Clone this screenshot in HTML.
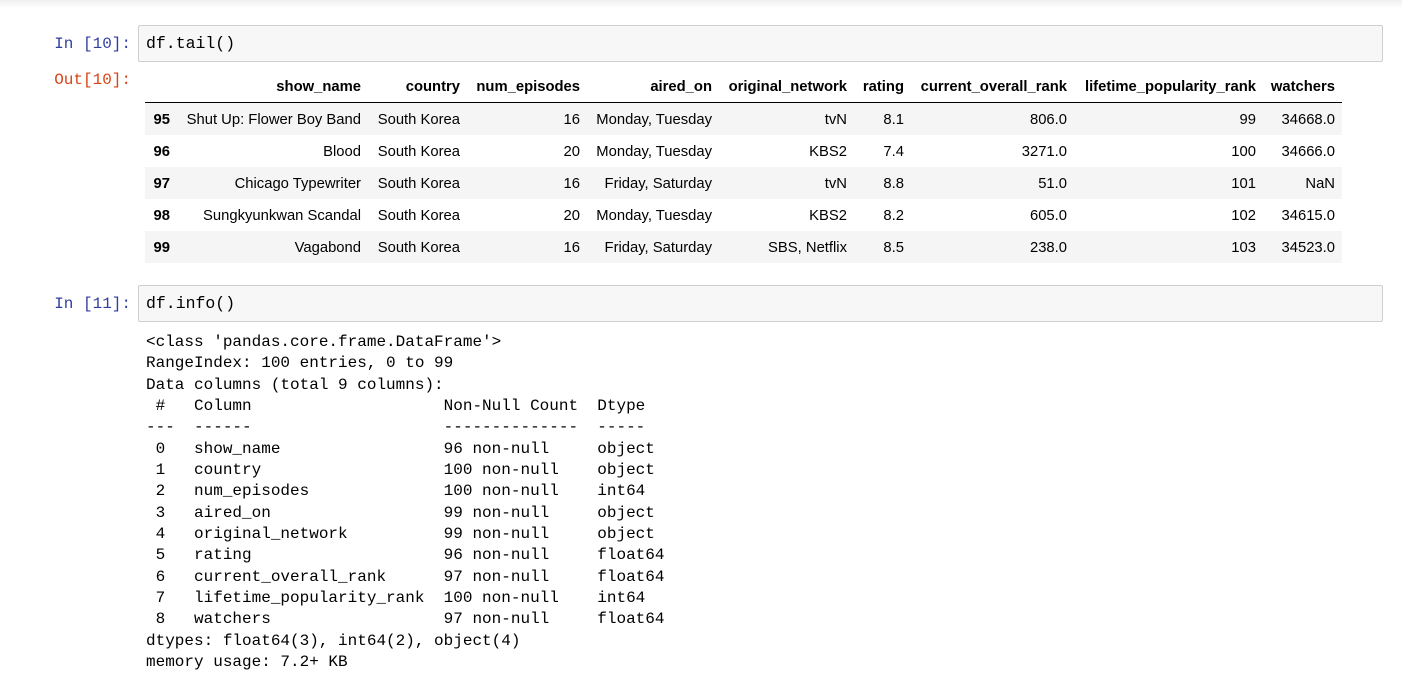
<!DOCTYPE html>
<html><head><style>
body{margin:0;width:1402px;height:670px;background:#fff;position:relative;overflow:hidden;font-family:"Liberation Sans",Arial,sans-serif}
.top{position:absolute;left:0;top:0;width:1402px;height:8px;background:linear-gradient(#f0f0f0,#fff)}
.prompt{position:absolute;font-family:"Liberation Mono",monospace;font-size:16px;text-align:right;width:131px;left:0}
.in{color:#303F9F}.out{color:#D84315}
.box{position:absolute;left:138px;width:1236px;height:35px;border:1px solid #cfcfcf;border-radius:2px;background:#f7f7f7;font-family:"Liberation Mono",monospace;font-size:16.5px;line-height:35px;padding-left:7px;box-sizing:content-box}
table{position:absolute;left:145px;top:70px;border-collapse:collapse;table-layout:fixed;width:1197px;font-size:14.8px;color:#000}
td,th{text-align:right;padding:2px 0 0 0;white-space:nowrap}
th{height:30px;font-weight:bold;border-bottom:1px solid #000;vertical-align:middle}
td{height:30px}
tr.g td{background:#f5f5f5}
td.i{font-weight:bold}
pre{position:absolute;left:146px;top:332px;margin:0;font-family:"Liberation Mono",monospace;font-size:16px;line-height:21.33px;color:#000}
</style></head><body>
<div class="top"></div>
<div class="prompt in" style="top:35px">In [10]:</div>
<div class="box" style="top:25px">df.tail()</div>
<div class="prompt out" style="top:71px">Out[10]:</div>
<table>
<colgroup><col style="width:25px"><col style="width:191px"><col style="width:99px"><col style="width:120px"><col style="width:132px"><col style="width:135px"><col style="width:57px"><col style="width:163px"><col style="width:189px"><col style="width:86px"></colgroup>
<tr><th></th><th>show_name</th><th>country</th><th>num_episodes</th><th>aired_on</th><th>original_network</th><th>rating</th><th>current_overall_rank</th><th>lifetime_popularity_rank</th><th style="padding-right:7px">watchers</th></tr>
<tr class="g"><td class="i">95</td><td>Shut Up: Flower Boy Band</td><td>South Korea</td><td>16</td><td>Monday, Tuesday</td><td>tvN</td><td>8.1</td><td>806.0</td><td>99</td><td style="padding-right:7px">34668.0</td></tr>
<tr><td class="i">96</td><td>Blood</td><td>South Korea</td><td>20</td><td>Monday, Tuesday</td><td>KBS2</td><td>7.4</td><td>3271.0</td><td>100</td><td style="padding-right:7px">34666.0</td></tr>
<tr class="g"><td class="i">97</td><td>Chicago Typewriter</td><td>South Korea</td><td>16</td><td>Friday, Saturday</td><td>tvN</td><td>8.8</td><td>51.0</td><td>101</td><td style="padding-right:7px">NaN</td></tr>
<tr><td class="i">98</td><td>Sungkyunkwan Scandal</td><td>South Korea</td><td>20</td><td>Monday, Tuesday</td><td>KBS2</td><td>8.2</td><td>605.0</td><td>102</td><td style="padding-right:7px">34615.0</td></tr>
<tr class="g"><td class="i">99</td><td>Vagabond</td><td>South Korea</td><td>16</td><td>Friday, Saturday</td><td>SBS, Netflix</td><td>8.5</td><td>238.0</td><td>103</td><td style="padding-right:7px">34523.0</td></tr>
</table>
<div class="prompt in" style="top:295px">In [11]:</div>
<div class="box" style="top:285px">df.info()</div>
<pre>&lt;class 'pandas.core.frame.DataFrame'&gt;
RangeIndex: 100 entries, 0 to 99
Data columns (total 9 columns):
 #   Column                    Non-Null Count  Dtype  
---  ------                    --------------  -----  
 0   show_name                 96 non-null     object 
 1   country                   100 non-null    object 
 2   num_episodes              100 non-null    int64  
 3   aired_on                  99 non-null     object 
 4   original_network          99 non-null     object 
 5   rating                    96 non-null     float64
 6   current_overall_rank      97 non-null     float64
 7   lifetime_popularity_rank  100 non-null    int64  
 8   watchers                  97 non-null     float64
dtypes: float64(3), int64(2), object(4)
memory usage: 7.2+ KB</pre>
</body></html>
